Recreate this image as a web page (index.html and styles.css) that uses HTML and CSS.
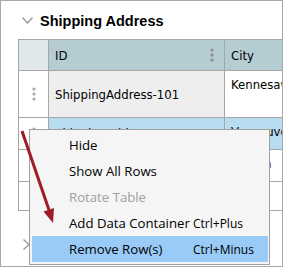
FILE: index.html
```html
<!DOCTYPE html>
<html lang="en">
<head>
  <meta charset="UTF-8">
  <title>Shipping Address</title>
  <link rel="stylesheet" href="styles.css">
</head>
<body>
  <div class="panel">
    <div class="section-head">
      <svg class="chev-down" width="11" height="7" viewBox="0 0 11 7"><path d="M0.5 0.5 L5.5 6 L10.5 0.5" /></svg>
      <span class="section-title">Shipping Address</span>
    </div>

    <table class="grid">
      <colgroup>
        <col class="c-gutter">
        <col class="c-id">
        <col class="c-city">
      </colgroup>
      <tr class="head">
        <th class="gutter corner"></th>
        <th class="col-id">
          <div class="th-inner">ID
            <svg class="dots dark" width="4" height="14" viewBox="0 0 4 14"><circle cx="2" cy="2" r="1.6"/><circle cx="2" cy="7" r="1.6"/><circle cx="2" cy="12" r="1.6"/></svg>
          </div>
        </th>
        <th class="col-city">City</th>
      </tr>
      <tr class="row-1">
        <td class="gutter"><svg class="dots" width="4" height="14" viewBox="0 0 4 14"><circle cx="2" cy="2" r="1.6"/><circle cx="2" cy="7" r="1.6"/><circle cx="2" cy="12" r="1.6"/></svg></td>
        <td class="id-cell">ShippingAddress-101</td>
        <td class="city-cell">Kennesaw</td>
      </tr>
      <tr class="row-2 selected">
        <td class="gutter"><svg class="dots" width="4" height="14" viewBox="0 0 4 14"><circle cx="2" cy="2" r="1.6"/><circle cx="2" cy="7" r="1.6"/><circle cx="2" cy="12" r="1.6"/></svg></td>
        <td class="id-cell">ShippingAddress-102</td>
        <td class="city-cell">Vancouver</td>
      </tr>
      <tr class="row-3">
        <td class="gutter"></td>
        <td class="id-cell">ShippingAddress-103</td>
        <td class="city-cell invalid">Vernon</td>
      </tr>
      <tr class="row-4">
        <td class="gutter"></td>
        <td class="id-cell"></td>
        <td class="city-cell"></td>
      </tr>
    </table>

    <div class="section-head collapsed">
      <svg class="chev-right" width="7" height="11" viewBox="0 0 7 11"><path d="M0.5 0.5 L6 5.5 L0.5 10.5" /></svg>
    </div>

    <div class="context-menu">
      <div class="menu-item">Hide</div>
      <div class="menu-item">Show All Rows</div>
      <div class="menu-item disabled">Rotate Table</div>
      <div class="menu-item"><span class="label">Add Data Container</span><span class="shortcut">Ctrl+Plus</span></div>
      <div class="menu-item active"><span class="label">Remove Row(s)</span><span class="shortcut">Ctrl+Minus</span></div>
    </div>

    <svg class="annotation" width="284" height="268" viewBox="0 0 284 268">
      <line x1="22" y1="131" x2="49" y2="210" stroke="#a01c24" stroke-width="3" />
      <polygon points="53,223 43.5,211.5 54,208" fill="#a01c24" />
    </svg>
  </div>
</body>
</html>
```

FILE: styles.css
```css
* {
    box-sizing: border-box;
}

body {
    margin: 0;
    background: #fff;
}

.panel {
    position: relative;
    width: 283px;
    height: 267px;
    border: 1px solid #a9a9a9;
    padding-left: 17px;
    overflow: hidden;
    font-family: "DejaVu Sans Condensed", "DejaVu Sans", sans-serif;
    font-stretch: condensed;
    font-size: 13px;
    color: #000;
}

/* section headers */
.section-head {
    display: flex;
    align-items: center;
    gap: 7px;
    height: 38px;
    padding-left: 4px;
}

.section-head.collapsed {
    margin-top: 14px;
    padding-left: 5px;
}

.chev-down path,
.chev-right path {
    fill: none;
    stroke: #9a9a9a;
    stroke-width: 1.4;
}

.section-title {
    font-family: "Liberation Sans", Arial, sans-serif;
    font-weight: bold;
    font-size: 14.5px;
    padding-top: 1px;
}

/* data table */
.grid {
    border-collapse: collapse;
    table-layout: fixed;
    width: 330px;
}

.c-gutter { width: 30px; }
.c-id { width: 176px; }
.c-city { width: 124px; }

.grid th,
.grid td {
    border: 1px solid #a6a6a6;
    padding: 0 6px;
    font-weight: normal;
    text-align: left;
    white-space: nowrap;
    overflow: hidden;
}

.grid .head { height: 31px; }
.grid .row-1 { height: 47px; }
.grid .row-2 { height: 32px; }
.grid .row-3 { height: 32px; }
.grid .row-4 { height: 29px; }

.grid .corner { background: #e1e8eb; }
.grid .col-id,
.grid .col-city { background: #b5ccd2; }

.th-inner {
    display: flex;
    align-items: center;
    justify-content: space-between;
    padding-right: 4px;
}

.gutter {
    text-align: center !important;
    padding: 0 !important;
}

.dots {
    display: block;
    margin: 0 auto;
    fill: #a8a8a8;
}

.dots.dark { fill: #8c8c8c; margin: 0; }

.row-1 .id-cell { background: #eeeeee; }

.city-cell {
    vertical-align: top;
    padding-top: 6px !important;
}

.selected .id-cell,
.selected .city-cell { background: #b8dcef; }

.invalid { color: #9a1a1a; }

/* context menu */
.context-menu {
    position: absolute;
    left: 28px;
    top: 128px;
    width: 241px;
    padding: 2px 1px 2px 2px;
    background: #f5f5f5;
    border: 1px solid #a0a0a0;
    font-family: "Open Sans", "Noto Sans", sans-serif;
    font-stretch: normal;
    font-size: 13.2px;
}

.menu-item {
    display: flex;
    align-items: center;
    height: 26px;
    padding-left: 37px;
}

.menu-item .label { width: 124px; }

.menu-item .shortcut { font-size: 12px; }

.menu-item.disabled { color: #a0a0a0; }

.menu-item.active { background: #99cbf6; }

.annotation {
    position: absolute;
    left: -1px;
    top: -1px;
    pointer-events: none;
}
```
